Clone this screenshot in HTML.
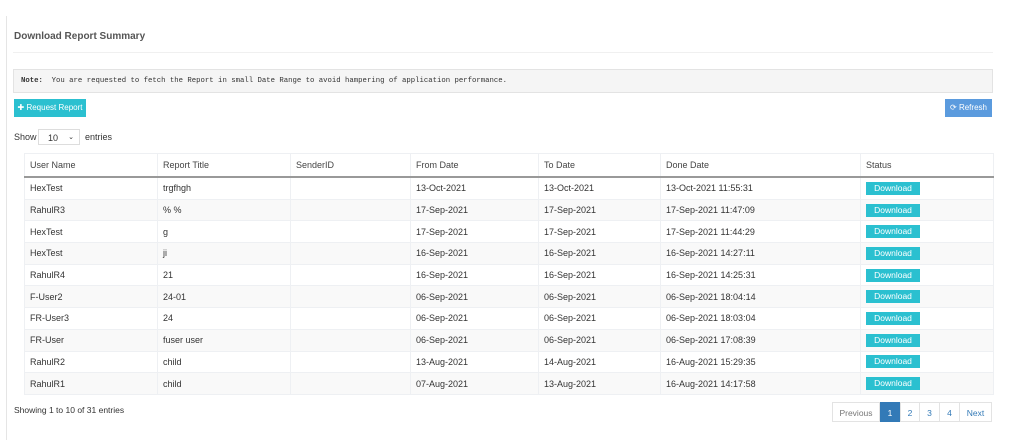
<!DOCTYPE html><html><head><style>
body{margin:0;background:#fff;font-family:"Liberation Sans",sans-serif;font-size:9px;color:#333;width:1025px;height:442px;overflow:hidden;position:relative}
.a{position:absolute}
table{border-collapse:collapse;position:absolute;left:24px;top:153px;width:969px;table-layout:fixed}
td,th{border:1px solid #eef0f3;height:20.7px;padding:0 5px;text-align:left;font-weight:normal;font-size:9px;white-space:nowrap;overflow:hidden}
th{height:22px;border-bottom:2px solid #999;color:#444}
tr:nth-child(odd) td{background:#f9f9f9}
.dl{display:inline-block;background:#2bc0d0;color:#fff;padding:0 8px;height:13px;line-height:13px;font-size:8.5px;width:38px;text-align:center}
.pg{position:absolute;top:402px;height:20px;line-height:20px;border:1px solid #e3e3e3;text-align:center;font-size:8.5px;color:#337ab7;box-sizing:border-box}
</style></head><body>
<div class="a" style="left:6px;top:16px;width:1px;height:424px;background:#e5e5e5"></div>
<div class="a" style="left:14px;top:31px;font-size:10px;font-weight:bold;color:#555">Download Report Summary</div>
<div class="a" style="left:13px;top:52px;width:980px;height:1px;background:#f0f0f0"></div>
<div class="a" style="left:13px;top:69px;width:978px;height:22px;background:#f5f5f5;border:1px solid #e3e3e3;font-family:'Liberation Mono',monospace;font-size:7.3px;line-height:22px;text-indent:7px;color:#333"><b>Note:</b>&nbsp; You are requested to fetch the Report in small Date Range to avoid hampering of application performance.</div>
<div class="a" style="left:14px;top:99px;width:72px;height:18px;background:#2bc0d0;color:#fff;font-size:8px;line-height:18px;text-align:center">✚ Request Report</div>
<div class="a" style="left:945px;top:99px;width:47px;height:18px;background:#5b9bde;color:#fff;font-size:8px;line-height:18px;text-align:center">⟳ Refresh</div>
<div class="a" style="left:14px;top:132px;font-size:9px">Show</div>
<div class="a" style="left:38px;top:129px;width:42px;height:16px;border:1px solid #ddd;font-size:9px;line-height:16px;box-sizing:border-box;padding-left:9px">10 <span style="position:absolute;right:5px;font-size:7px">⌄</span></div>
<div class="a" style="left:85px;top:132px;font-size:9px">entries</div>
<table>
<colgroup><col style="width:133px"><col style="width:133px"><col style="width:120px"><col style="width:128px"><col style="width:122px"><col style="width:200px"><col style="width:133px"></colgroup>
<tr><th>User Name</th><th>Report Title</th><th>SenderID</th><th>From Date</th><th>To Date</th><th>Done Date</th><th>Status</th></tr>
<tr><td>HexTest</td><td>trgfhgh</td><td></td><td>13-Oct-2021</td><td>13-Oct-2021</td><td>13-Oct-2021 11:55:31</td><td><span class="dl">Download</span></td></tr>
<tr><td>RahulR3</td><td>% %</td><td></td><td>17-Sep-2021</td><td>17-Sep-2021</td><td>17-Sep-2021 11:47:09</td><td><span class="dl">Download</span></td></tr>
<tr><td>HexTest</td><td>g</td><td></td><td>17-Sep-2021</td><td>17-Sep-2021</td><td>17-Sep-2021 11:44:29</td><td><span class="dl">Download</span></td></tr>
<tr><td>HexTest</td><td>ji</td><td></td><td>16-Sep-2021</td><td>16-Sep-2021</td><td>16-Sep-2021 14:27:11</td><td><span class="dl">Download</span></td></tr>
<tr><td>RahulR4</td><td>21</td><td></td><td>16-Sep-2021</td><td>16-Sep-2021</td><td>16-Sep-2021 14:25:31</td><td><span class="dl">Download</span></td></tr>
<tr><td>F-User2</td><td>24-01</td><td></td><td>06-Sep-2021</td><td>06-Sep-2021</td><td>06-Sep-2021 18:04:14</td><td><span class="dl">Download</span></td></tr>
<tr><td>FR-User3</td><td>24</td><td></td><td>06-Sep-2021</td><td>06-Sep-2021</td><td>06-Sep-2021 18:03:04</td><td><span class="dl">Download</span></td></tr>
<tr><td>FR-User</td><td>fuser user</td><td></td><td>06-Sep-2021</td><td>06-Sep-2021</td><td>06-Sep-2021 17:08:39</td><td><span class="dl">Download</span></td></tr>
<tr><td>RahulR2</td><td>child</td><td></td><td>13-Aug-2021</td><td>14-Aug-2021</td><td>16-Aug-2021 15:29:35</td><td><span class="dl">Download</span></td></tr>
<tr><td>RahulR1</td><td>child</td><td></td><td>07-Aug-2021</td><td>13-Aug-2021</td><td>16-Aug-2021 14:17:58</td><td><span class="dl">Download</span></td></tr>
</table>
<div class="a" style="left:14px;top:405px;font-size:8.5px">Showing 1 to 10 of 31 entries</div>
<div class="pg" style="left:832px;width:48px;color:#777">Previous</div>
<div class="pg" style="left:880px;width:20px;background:#337ab7;color:#fff;border-color:#337ab7">1</div>
<div class="pg" style="left:900px;width:20px">2</div>
<div class="pg" style="left:919px;width:21px">3</div>
<div class="pg" style="left:939px;width:21px">4</div>
<div class="pg" style="left:959px;width:33px">Next</div>
</body></html>
